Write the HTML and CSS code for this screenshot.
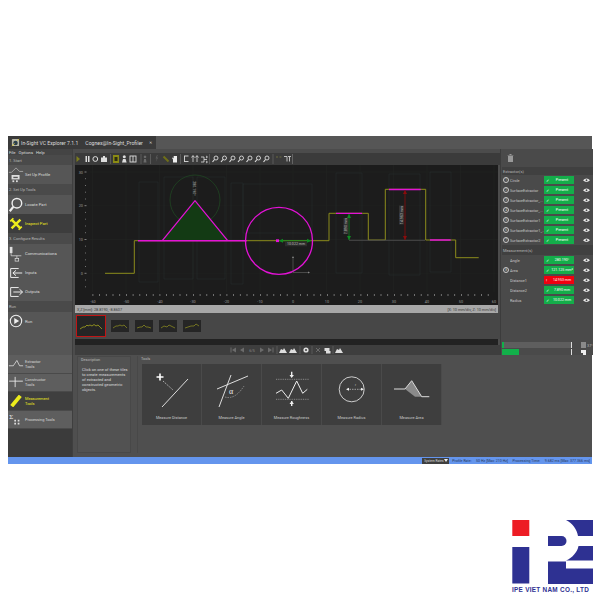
FILE: index.html
```html
<!DOCTYPE html>
<html lang="en">
<head>
<meta charset="utf-8">
<title>In-Sight VC Explorer</title>
<link rel="stylesheet" href="styles.css">
</head>
<body>
<div class="app">
  <header class="titlebar">
    <div class="title-main">
      <svg class="app-icon" viewBox="0 0 10 10"><rect x="1" y="1" width="8" height="8" rx="1" fill="#b8b8a8"/><circle cx="5" cy="5.5" r="2.5" fill="#2d3f4a"/><path d="M1 9L4 6M9 1L7 3" stroke="#d6c43a" stroke-width="1"/></svg>
      <span>In-Sight VC Explorer 7.1.1</span>
      <span class="title-doc">Cognex@In-Sight_Profiler</span>
      <span class="title-x">✕</span>
    </div>
  </header>
  <div class="workspace">
    <aside class="left">
      <nav class="menu"><span>File</span><span>Options</span><span>Help</span></nav>
      <div class="sec">1. Start</div>
      <div class="item">
        <svg class="ico" viewBox="0 0 18 18"><path d="M1 6H4L9 1L13 5H17" fill="none" stroke="#ddd" stroke-width=".6"/><rect x="4" y="9" width="9" height="5" fill="#ddd"/><rect x="6" y="11" width="5" height="1.5" fill="#555"/><rect x="5" y="15" width="2" height="2" fill="#ddd"/><rect x="9" y="15" width="2" height="2" fill="#ddd"/></svg>
        <span>Set Up Profile</span>
      </div>
      <div class="sec tall">2. Set Up Tools</div>
      <div class="item">
        <svg class="ico" viewBox="0 0 18 18"><circle cx="10" cy="7" r="5.4" fill="none" stroke="#eee" stroke-width="1.6"/><path d="M6 11L2 16" stroke="#eee" stroke-width="2.4"/></svg>
        <span>Locate Part</span>
      </div>
      <div class="item on">
        <svg class="ico" viewBox="0 0 18 18"><path d="M4 4L14 14M14 4L4 14" stroke="#ecec1c" stroke-width="2.8"/><path d="M2.500 6L6 2.500M12 15.500L15.500 12" stroke="#ecec1c" stroke-width="1.800"/></svg>
        <span>Inspect Part</span>
      </div>
      <div class="sec tall">3. Configure Results</div>
      <div class="item">
        <svg class="ico" viewBox="0 0 18 18"><rect x="2" y="1" width="3" height="7" fill="#ddd"/><path d="M3.5 8V11H15M10 11V14" stroke="#ddd" stroke-width=".8" fill="none"/><rect x="8" y="14" width="4" height="3" fill="none" stroke="#ddd" stroke-width=".8"/></svg>
        <span>Communications</span>
      </div>
      <div class="item">
        <svg class="ico" viewBox="0 0 18 18"><path d="M12 4H3V14H12M16 9H6M9 6L5.5 9L9 12" fill="none" stroke="#eee" stroke-width="1.1"/></svg>
        <span>Inputs</span>
      </div>
      <div class="item">
        <svg class="ico" viewBox="0 0 18 18"><path d="M12 4H3V14H12M6 9H16M13 6L16.5 9L13 12" fill="none" stroke="#eee" stroke-width="1.1"/></svg>
        <span>Outputs</span>
      </div>
      <div class="sec tall">Run</div>
      <div class="item fill">
        <svg class="ico" viewBox="0 0 18 18"><circle cx="9" cy="9" r="6.4" fill="none" stroke="#eee" stroke-width="1.2"/><path d="M7 5.5L12.5 9L7 12.5Z" fill="#eee"/></svg>
        <span>Run</span>
      </div>
    </aside>
    <main class="center">
      <div class="toolbar">
        <svg width="425" height="12" viewBox="75 153 425 12">
          <path d="M76.5 156L80 159L76.5 162Z" fill="#7c7c1e"/>
          <path d="M85.5 156h1.5v6h-1.5zM88 156h1.5v6H88z" fill="#ddd"/>
          <circle cx="95.3" cy="159" r="2.4" fill="none" stroke="#ddd" stroke-width="1"/>
          <path d="M101 157.5h6v4.5h-6zM103 156h2v1.5h-2z" fill="#ddd"/>
          <path d="M110.500 154v10M141 154v10M150.500 154v10M180.500 154v10M209.500 154v10M273 154v10" stroke="#707070" stroke-width=".6"/>
          <rect x="113" y="155" width="6" height="8" fill="#8b8b14"/><rect x="114.500" y="157" width="3" height="4" fill="#2e2e10"/>
          <circle cx="124.300" cy="156.700" r="1.500" fill="#ddd"/><path d="M122 162.500h4.600l-1-3.500h-2.600z" fill="#ddd"/>
          <rect x="130" y="156" width="6" height="6" fill="none" stroke="#ddd" stroke-width=".9"/><path d="M133 156v6" stroke="#ddd" stroke-width=".9"/>
          <path d="M143.500 162.500h3l-.6-3.500h-1.800zM145 155.500a1.300 1.300 0 1 0 .01 0" fill="#6a6a6a"/>
          <path d="M157 155l-1.500 3.500h1.300l-1 3.500 2.400-4.400h-1.300l.8-2.600z" fill="#5a5a5a"/>
          <path d="M163.500 156.500l5 5" stroke="#6f6f18" stroke-width="2"/>
          <path d="M173 162.500v-3l-1-1.500 1-.5.700 1v-2.500h3.300v6.500z" fill="#eee"/>
          <path d="M184 156h4.500M184 161.500h4.500M184.500 156v5.500" stroke="#ddd" stroke-width=".9"/>
          <path d="M193 162v-6M191.500 157.500l1.500-2 1.500 2M197 162v-6M195.500 157.500l1.500-2 1.500 2" stroke="#ddd" stroke-width=".8" fill="none"/>
          <path d="M201 157h3v2.500h3M201 162h3v-2.500M206 156l1.500 1-1.500 1M206 161l1.500 1-1.500 1" stroke="#ddd" stroke-width=".8" fill="none"/>
          <g fill="none" stroke="#ddd">
            <circle cx="216" cy="158" r="2" stroke-width=".9"/><path d="M214.500 159.500l-2 2.500" stroke-width="1.200"/>
            <circle cx="224.500" cy="158" r="2" stroke-width=".9"/><path d="M223 159.500l-2 2.500" stroke-width="1.200"/>
            <circle cx="233" cy="158" r="2" stroke-width=".9"/><path d="M231.500 159.500l-2 2.500" stroke-width="1.200"/>
            <circle cx="241.500" cy="158" r="2" stroke-width=".9"/><path d="M240 159.500l-2 2.500" stroke-width="1.200"/>
            <circle cx="250" cy="158" r="2" stroke-width=".9"/><path d="M248.500 159.500l-2 2.500" stroke-width="1.200"/>
            <circle cx="258.500" cy="158" r="2" stroke-width=".9"/><path d="M257 159.500l-2 2.500" stroke-width="1.200"/>
            <circle cx="267" cy="158" r="2" stroke-width=".9"/><path d="M265.500 159.500l-2 2.500" stroke-width="1.200"/>
          </g>
          <path d="M276 157h2M279.500 157h2" stroke="#6a6a40" stroke-width="1"/>
          <path d="M284 156.500h3v5M288 156.500h3M289.500 156.500v5" stroke="#ccc" stroke-width=".9" fill="none"/>
          <path d="M292.500 154v10" stroke="#808080" stroke-width=".6"/>
        </svg>
      </div>
      <div class="chart">
        <svg class="plot" width="423" height="140" viewBox="75 165 423 140">
          <g stroke="#232423" stroke-width=".5">
            <path d="M92.500 165V292M126 165V292M159.500 165V292M193 165V292M226.500 165V292M260 165V292M293 165V292M326.500 165V292M360 165V292M393.500 165V292M427 165V292M460.500 165V292M494 165V292"/>
            <path d="M90 172H498M90 205.700H498M90 239.500H498M90 273.300H498"/>
          </g>
          <g fill="none" stroke="#2b3435" stroke-width=".4">
            <rect x="139" y="182" width="19" height="100"/>
            <rect x="164" y="177" width="29" height="102"/>
            <rect x="197" y="177" width="28" height="102"/>
            <rect x="231" y="183" width="12" height="101"/>
            <rect x="243" y="184" width="69" height="49"/>
            <rect x="336" y="173" width="26" height="100"/>
            <rect x="389" y="174" width="31" height="101"/>
            <rect x="430" y="172" width="21" height="100"/>
          </g>
          <circle cx="195" cy="200" r="25" fill="none" stroke="#1f4a22" stroke-width=".7"/>
          <path d="M162.300 240.700L195 200.700L227.700 240.700Z" fill="#133a14"/>
          <path d="M105 273.300H134.300V240.700H329V213.300H368.300V240H385.300V189.300H425.700V240H455.700V257.700H478.700" fill="none" stroke="#8c8c1c" stroke-width="1"/>
          <path d="M349 240.300H425" stroke="#4a4a4a" stroke-width="1"/>
          <g fill="none" stroke="#e312d6">
            <path d="M138 240.700H246.700" stroke-width="1.500"/>
            <path d="M162.300 240.700L195 200.700L227.700 240.700" stroke-width="1.300"/>
            <path d="M336 213.300H362M389 189.500H420.700M430 240H450.700" stroke-width="1.300"/>
            <circle cx="279" cy="240.800" r="33.500" stroke-width="1.300"/>
          </g>
          <g stroke="#0e8a22" stroke-width=".8" fill="none">
            <path d="M279 240.700H311"/><path d="M349 214V240"/>
          </g>
          <path d="M279 240.700l4-2v4zM311 240.700l-4-2v4zM349 214l-2 4h4zM349 240l-2-4h4z" fill="#0e8a22"/>
          <path d="M405 190.500V240" stroke="#8a0c0c" stroke-width=".8"/>
          <path d="M405 190l-2 4h4zM405 240l-2-4h4z" fill="#8a0c0c"/>
          <path d="M293 272.500V257M293 272.500H309" stroke="#777" stroke-width=".5" fill="none"/>
          <path d="M293 256l-1 2h2zM310 272.500l-2-1v2z" fill="#888"/>
          <rect x="276" y="239.300" width="3" height="2.800" fill="#e312d6"/>
          <g class="tick-y" fill="#9a9a9a">
            <text x="83" y="173.500" text-anchor="end">30</text><text x="83" y="207.200" text-anchor="end">20</text><text x="83" y="241" text-anchor="end">10</text><text x="83" y="274.800" text-anchor="end">0</text>
          </g>
          <g stroke="#999" stroke-width=".8">
            <path d="M84.500 172h2M84.500 205.700h2M84.500 239.500h2M84.500 273.300h2"/>
            <path d="M85 178.700h1M85 185.500h1M85 192.200h1M85 199h1M85 212.400h1M85 219.200h1M85 226h1M85 232.700h1M85 246.200h1M85 253h1M85 259.800h1M85 266.500h1M85 280h1M85 286.800h1" stroke-width=".7"/>
          </g>
          <path d="M92.500 295h401.500" stroke="#aaa" stroke-width="1.400" stroke-dasharray=".8 5.900" fill="none"/>
          <g class="tick-x" fill="#9a9a9a" text-anchor="middle">
            <text x="93" y="303">-60</text><text x="126.500" y="303">-50</text><text x="160" y="303">-40</text><text x="193" y="303">-30</text><text x="226.500" y="303">-20</text><text x="260" y="303">-10</text><text x="293" y="303">0</text><text x="327" y="303">10</text><text x="360" y="303">20</text><text x="394" y="303">30</text><text x="427" y="303">40</text><text x="461" y="303">50</text><text x="494" y="303">60</text>
          </g>
          <rect x="285" y="241.800" width="22" height="4.500" fill="#2c2c2c"/>
          <text class="tag" x="296" y="245.400" text-anchor="middle">10.022 mm</text>
          <g transform="rotate(90 194.700 188.500)"><text class="tag" x="194.700" y="190" text-anchor="middle">280.190°</text></g>
          <g transform="rotate(-90 346 226)"><rect x="338" y="223.500" width="16" height="4.800" fill="#333"/><text class="tag" x="346" y="227.300" text-anchor="middle">7.890 mm</text></g>
          <g transform="rotate(-90 401.500 215)"><rect x="392" y="212.500" width="19" height="4.800" fill="#333"/><text class="tag" x="401.500" y="216.300" text-anchor="middle">14.953 mm</text></g>
        </svg>
      </div>
      <div class="coords"><span>X,Z [mm]: 28.8190, -8.8607</span><span>[X: 10 mm/div, Z: 10 mm/div]</span></div>
      <div class="thumbs">
        <svg class="thumb big" viewBox="0 0 28 20"><path d="M3 13L6 11H8L10 9L11 10L13 9L15 10L17 8.500L19 10L21 9L23 11L25 13" fill="none" stroke="#a6a61e" stroke-width=".8"/></svg>
        <svg class="thumb" viewBox="0 0 18 12"><path d="M2 8L5 6H7L9 5L11 6L13 5L16 8" fill="none" stroke="#a6a61e" stroke-width=".6"/></svg>
        <svg class="thumb" viewBox="0 0 18 12"><path d="M2 8L5 7H7L9 5L11 7H13L16 8" fill="none" stroke="#a6a61e" stroke-width=".6"/></svg>
        <svg class="thumb" viewBox="0 0 18 12"><path d="M2 8L5 6L8 7L10 5L12 6L16 8" fill="none" stroke="#a6a61e" stroke-width=".6"/></svg>
        <svg class="thumb" viewBox="0 0 18 12"><path d="M2 8L5 7L8 6L11 6L13 4L16 6" fill="none" stroke="#a6a61e" stroke-width=".6"/></svg>
      </div>
      <div class="track"></div>
      <div class="controls">
        <svg width="425" height="10" viewBox="75 345 425 10">
          <g fill="#6b6b6b">
            <path d="M230.500 347.500h1v5h-1zM236 347.500v5l-4-2.500zM244 347.500v5l-4-2.500zM260 347.500v5l4-2.500zM268 347.500v5l4-2.500zM272.500 347.500h1v5h-1z"/>
          </g>
          <text class="tag dim" x="252" y="351.600" text-anchor="middle">6/5</text>
          <path d="M277 346v8M300 346v8M312 346v8M333 346v8" stroke="#777" stroke-width=".5"/>
          <g fill="#ddd">
            <path d="M279 353l2-4 2 1 1-2 3 5zM289 353l2-4 2 1 1-2 3 5zM335 353l2-4 2 1 1-2 3 5z"/>
            <circle cx="306" cy="350" r="2.600"/>
            <path d="M324.500 348h5v3h-5zM326 351h4.500v2.500h-4.500z"/>
          </g>
          <circle cx="306" cy="350" r="1" fill="#3e3e3e"/>
          <path d="M316 348l4 4M320 348l-4 4" stroke="#6b6b6b" stroke-width="1"/>
        </svg>
      </div>
    </main>
    <aside class="right">
      <div class="trash">
        <svg width="7" height="8" viewBox="0 0 7 8"><path d="M1 2h5v6H1zM2.500 0h2v1h2v.6h-6V1h2z" fill="#999"/></svg>
      </div>
      <div class="rhead">Extractor(s)</div>
      <div class="row"><i class="num">1</i><span class="name">Circle</span><b class="pill ok"><u>✓</u><em>Present</em></b><svg class="eye" viewBox="0 0 10 6"><path d="M0 3Q5 -2 10 3Q5 8 0 3Z" fill="#eee"/><circle cx="5" cy="3" r="1.300" fill="#444"/></svg></div>
      <div class="row"><i class="num">2</i><span class="name">SurfaceExtractor</span><b class="pill ok"><u>✓</u><em>Present</em></b><svg class="eye" viewBox="0 0 10 6"><path d="M0 3Q5 -2 10 3Q5 8 0 3Z" fill="#eee"/><circle cx="5" cy="3" r="1.300" fill="#444"/></svg></div>
      <div class="row"><i class="num">3</i><span class="name">SurfaceExtractor_...</span><b class="pill ok"><u>✓</u><em>Present</em></b><svg class="eye" viewBox="0 0 10 6"><path d="M0 3Q5 -2 10 3Q5 8 0 3Z" fill="#eee"/><circle cx="5" cy="3" r="1.300" fill="#444"/></svg></div>
      <div class="row"><i class="num">4</i><span class="name">SurfaceExtractor_...</span><b class="pill ok"><u>✓</u><em>Present</em></b><svg class="eye" viewBox="0 0 10 6"><path d="M0 3Q5 -2 10 3Q5 8 0 3Z" fill="#eee"/><circle cx="5" cy="3" r="1.300" fill="#444"/></svg></div>
      <div class="row"><i class="num">5</i><span class="name">SurfaceExtractor1</span><b class="pill ok"><u>✓</u><em>Present</em></b><svg class="eye" viewBox="0 0 10 6"><path d="M0 3Q5 -2 10 3Q5 8 0 3Z" fill="#eee"/><circle cx="5" cy="3" r="1.300" fill="#444"/></svg></div>
      <div class="row"><i class="num">6</i><span class="name">SurfaceExtractor1_...</span><b class="pill ok"><u>✓</u><em>Present</em></b><svg class="eye" viewBox="0 0 10 6"><path d="M0 3Q5 -2 10 3Q5 8 0 3Z" fill="#eee"/><circle cx="5" cy="3" r="1.300" fill="#444"/></svg></div>
      <div class="row"><i class="num">7</i><span class="name">SurfaceExtractor2</span><b class="pill ok"><u>✓</u><em>Present</em></b><svg class="eye" viewBox="0 0 10 6"><path d="M0 3Q5 -2 10 3Q5 8 0 3Z" fill="#eee"/><circle cx="5" cy="3" r="1.300" fill="#444"/></svg></div>
      <div class="rhead second">Measurement(s)</div>
      <div class="row"><i class="num none"></i><span class="name">Angle</span><b class="pill ok"><u>✓</u><em>280.190°</em></b><svg class="eye" viewBox="0 0 10 6"><path d="M0 3Q5 -2 10 3Q5 8 0 3Z" fill="#eee"/><circle cx="5" cy="3" r="1.300" fill="#444"/></svg></div>
      <div class="row"><i class="num">8</i><span class="name">Area</span><b class="pill ok"><u>✓</u><em>121.125 mm²</em></b><svg class="eye" viewBox="0 0 10 6"><path d="M0 3Q5 -2 10 3Q5 8 0 3Z" fill="#eee"/><circle cx="5" cy="3" r="1.300" fill="#444"/></svg></div>
      <div class="row"><i class="num none"></i><span class="name">Distance1</span><b class="pill bad"><u>!</u><em>14.953 mm</em></b><svg class="eye" viewBox="0 0 10 6"><path d="M0 3Q5 -2 10 3Q5 8 0 3Z" fill="#eee"/><circle cx="5" cy="3" r="1.300" fill="#444"/></svg></div>
      <div class="row"><i class="num none"></i><span class="name">Distance2</span><b class="pill ok"><u>✓</u><em>7.890 mm</em></b><svg class="eye" viewBox="0 0 10 6"><path d="M0 3Q5 -2 10 3Q5 8 0 3Z" fill="#eee"/><circle cx="5" cy="3" r="1.300" fill="#444"/></svg></div>
      <div class="row"><i class="num none"></i><span class="name">Radius</span><b class="pill ok"><u>✓</u><em>10.022 mm</em></b><svg class="eye" viewBox="0 0 10 6"><path d="M0 3Q5 -2 10 3Q5 8 0 3Z" fill="#eee"/><circle cx="5" cy="3" r="1.300" fill="#444"/></svg></div>
      <div class="meters">
        <div class="meter-row">
          <div class="meter"><i class="meter-a"></i></div>
          <svg class="meter-ico" width="5" height="6" viewBox="0 0 5 6"><path d="M0 0h5v6H0z" fill="#8a8a8a"/></svg>
          <span class="temp">37°</span>
        </div>
        <div class="meter-row">
          <div class="meter plain"><i class="meter-b"></i></div>
          <svg class="meter-ico" width="5" height="5" viewBox="0 0 5 5"><path d="M0 0h5v5H2V3H0z" fill="#eee"/></svg>
        </div>
      </div>
    </aside>
  </div>
  <section class="lower">
    <div class="tabs">
      <div class="tab">
        <svg class="tab-ico" viewBox="0 0 18 12"><path d="M1 8H6L10 2L13 8H17" fill="none" stroke="#eee" stroke-width=".8"/></svg>
        <span>Extractor<br>Tools</span>
      </div>
      <div class="tab">
        <svg class="tab-ico" viewBox="0 0 18 14"><path d="M1 6H17M8 1V13" fill="none" stroke="#eee" stroke-width="1"/></svg>
        <span>Constructor<br>Tools</span>
      </div>
      <div class="tab on">
        <svg class="tab-ico" viewBox="0 0 18 14"><path d="M4 13L14 1" stroke="#ecec1c" stroke-width="4.500"/></svg>
        <span>Measurement<br>Tools</span>
      </div>
      <div class="tab">
        <svg class="tab-ico" viewBox="0 0 18 14"><text class="sigma" x="1" y="7">Σ</text><path d="M7 8h2v2H7zM11 8h2v2h-2zM7 11.500h2v2H7zM11 11.500h2v2h-2z" fill="#ddd"/></svg>
        <span>Processing Tools</span>
      </div>
      <div class="tab-rest"></div>
    </div>
    <div class="content">
      <div class="panel desc">
        <h4>Description</h4>
        <p class="desc-text">Click on one of these tiles<br>to create measurements<br>of extracted and<br>constructed geometric<br>objects.</p>
      </div>
      <div class="panel tools">
        <h4>Tools</h4>
        <div class="tiles">
          <div class="tile">
            <svg viewBox="0 0 60 50" width="60" height="50"><path d="M18 9.500v7M14.500 13h7" stroke="#fff" stroke-width="1.600"/><path d="M21 17L31 26" stroke="#ccc" stroke-width=".8" stroke-dasharray="1.500 1"/><path d="M20 43L46 15" stroke="#eee" stroke-width=".9"/></svg>
            <span>Measure Distance</span>
          </div>
          <div class="tile">
            <svg viewBox="0 0 60 50" width="60" height="50"><path d="M15 25L46 12M17 43L29 11" stroke="#eee" stroke-width=".9"/><path d="M23 33Q33 36 42 22" fill="none" stroke="#aaa" stroke-width=".7" stroke-dasharray="1.500 1"/><text class="alpha" x="27" y="30">α</text></svg>
            <span>Measure Angle</span>
          </div>
          <div class="tile">
            <svg viewBox="0 0 60 50" width="60" height="50"><path d="M14 15.300H47M14 35.300H47" stroke="#bbb" stroke-width=".6" stroke-dasharray="1 .8"/><path d="M14 29.300L19.700 26L26.300 34.300L34.700 17L40.700 29.300L45.300 25.300" fill="none" stroke="#eee" stroke-width="1"/><path d="M29.700 7.700v4M29.700 37v5" stroke="#eee" stroke-width="1.400"/><path d="M27.500 11h4.400l-2.200 3zM27.500 40h4.400l-2.200-3z" fill="#eee"/></svg>
            <span>Measure Roughness</span>
          </div>
          <div class="tile">
            <svg viewBox="0 0 60 50" width="60" height="50"><circle cx="29.700" cy="25.300" r="12.500" fill="none" stroke="#ddd" stroke-width=".9"/><path d="M25 25.300H41" stroke="#ccc" stroke-width=".7" stroke-dasharray="1.500 1"/><path d="M24 25.300l3-1.500v3zM42 25.300l-3-1.500v3z" fill="#eee"/><text class="mini" x="33" y="22">r</text></svg>
            <span>Measure Radius</span>
          </div>
          <div class="tile">
            <svg viewBox="0 0 60 50" width="60" height="50"><path d="M23 25L29.700 17L39.700 32.700H33Z" fill="#8a8a8a"/><path d="M12 25H23L29.700 16.700L39.700 32.700H47.300" fill="none" stroke="#ddd" stroke-width="1"/></svg>
            <span>Measure Area</span>
          </div>
        </div>
      </div>
    </div>
  </section>
  <footer class="status">
    <div class="sys">System Rates <svg width="4" height="3" viewBox="0 0 4 3"><path d="M0 0h4L2 3z" fill="#eee"/></svg></div>
    <span>Profile Rate:</span><span>50 Hz [Max: 210 Hz]</span><span>Processing Time:</span><span>9.682 ms [Max: 377.366 ms]</span>
  </footer>
</div>
<div class="logo">
  <svg width="82" height="65" viewBox="512 520 82 65">
    <rect x="512.300" y="520" width="17" height="16" fill="#ed1c24"/>
    <rect x="512.300" y="547" width="17" height="36.500" fill="#2e3192"/>
    <path d="M566 520H593V536H578C577 529 572 523 566 520Z" fill="#2e3192"/>
    <path d="M548 536H561.500a5 5 0 0 1 0 10H548Z" fill="#2e3192"/>
    <path d="M578.500 546H593V560.500H566C572 558 577.500 552 578.500 546Z" fill="#2e3192"/>
    <path d="M548 561.500H566V568.500H593V584H548Z" fill="#2e3192"/>
  </svg>
  <div class="logo-text">IPE VIET NAM CO., LTD</div>
</div>
</body>
</html>
```

FILE: styles.css
```css
* { box-sizing: border-box; }
html, body { margin: 0; padding: 0; background: #fff; }
body { width: 600px; height: 600px; padding: 136px 8px 0; overflow: hidden; font-family: Roboto, "Liberation Sans", sans-serif; }

.app { width: 584px; height: 328px; background: #4c4c4c; color: #cfcfcf; font-size: 4.2px; display: flex; flex-direction: column; }

.titlebar { height: 13px; background: #565656; flex: none; }
.title-main { width: 148px; height: 13px; background: #3a3a3a; display: flex; align-items: center; padding-left: 3px; font-size: 5.100px; color: #ddd; white-space: nowrap; }
.app-icon { width: 9px; height: 9px; margin-right: 1px; flex: none; }
.title-doc { margin-left: 7px; }
.title-x { margin-left: 6px; font-size: 4px; color: #ddd; }

.workspace { display: flex; height: 206px; flex: none; }

.left { width: 65px; flex: none; display: flex; flex-direction: column; background: #565656; border-right: 1px solid #3f3f3f; }
.menu { height: 6px; background: #444; display: flex; align-items: center; gap: 3px; padding-left: 1px; color: #ddd; }
.sec { height: 10px; background: #4a4a4a; display: flex; align-items: center; padding-left: 1px; color: #b8b8b8; font-size: 4px; }
.sec.tall { height: 11px; }
.item { height: 19px; display: flex; align-items: center; background: #565656; color: #ddd; font-size: 4.2px; }
.item.fill { flex: 1; align-items: flex-start; padding-top: 1px; }
.item.fill span { margin-top: 6px; }
.item.on { background: #3d3d3d; color: #ecec1c; }
.ico { width: 16px; height: 16px; margin-right: 1px; flex: none; }

.center { width: 427px; flex: none; display: flex; flex-direction: column; padding-left: 2px; padding-top: 4px; background: #4c4c4c; }
.toolbar { height: 12px; background: #3b3b3b; flex: none; }
.toolbar svg, .controls svg { display: block; }
.chart { height: 140px; width: 423px; background: #1c1c1c; flex: none; }
.plot { display: block; }
.plot text { font-family: Roboto, "Liberation Sans", sans-serif; font-size: 3.8px; }
.plot .tag, .tag { fill: #bdbdbd; font-size: 3.6px; font-family: Roboto, "Liberation Sans", sans-serif; }
.tag.dim { fill: #888; }

.coords { height: 8px; width: 423px; background: #a8a8a8; color: #3a3a3a; font-size: 3.8px; display: flex; justify-content: space-between; align-items: center; padding: 0 2px; flex: none; }

.thumbs { height: 26px; display: flex; align-items: center; gap: 6px; padding-left: 2px; flex: none; background: #474747; }
.thumb { width: 18px; height: 12px; background: #252525; flex: none; }
.thumb.big { width: 28px; height: 20px; outline: 1px solid #c01515; }

.track { height: 6px; background: #222; flex: none; width: 423px; }
.controls { height: 10px; background: #3e3e3e; flex: none; }

.right { flex: 1; display: flex; flex-direction: column; background: #4a4a4a; padding-left: 1px; border-left: 1px solid #3c3c3c; }
.trash { height: 18px; padding: 5px 0 0 5px; }
.rhead { height: 8px; background: #404040; font-size: 4px; color: #b5b5b5; padding-left: 1px; display: flex; align-items: center; }
.rhead.second { height: 10px; }
.row { height: 10px; display: flex; align-items: center; padding-left: 1px; flex: none; }
.num { width: 6px; height: 6px; margin: 0 1px 0 0; border: .6px solid #ccc; border-radius: 50%; font-size: 3px; font-style: normal; line-height: 5px; text-align: center; flex: none; }
.num.none { border: 0; }
.name { width: 34px; color: #c8c8c8; font-size: 3.8px; white-space: nowrap; overflow: hidden; }
.pill { width: 30px; height: 8.500px; display: flex; align-items: center; padding-left: 2px; color: #fff; font-size: 4px; font-weight: 400; flex: none; white-space: nowrap; }
.pill u { text-decoration: none; width: 4px; flex: none; }
.pill em { font-style: normal; font-size: 3.600px; flex: 1; text-align: center; }
.ok { background: #14ad4a; }
.bad { background: #f00010; }
.eye { width: 7px; height: 4.500px; margin-left: 9px; flex: none; }

.meters { margin-top: auto; height: 13px; display: flex; flex-direction: column; gap: 1px; }
.meter-row { display: flex; align-items: center; height: 6px; }
.meter { width: 70px; height: 6px; background: #5e5e5e; border-right: 1px solid #ddd; flex: none; }
.meter.plain { background: #4a4a4a; }
.meter i { display: block; height: 100%; background: #12b04a; }
.meter-a { width: 1.500px; }
.meter-b { width: 17px; }
.meter-ico { margin-left: 9px; flex: none; }
.temp { font-size: 3.800px; margin-left: 1px; color: #bbb; }

.lower { height: 102px; display: flex; flex: none; background: #4f4f4f; }
.tabs { width: 65px; flex: none; display: flex; flex-direction: column; border-right: 1px solid #3f3f3f; }
.tab { height: 18.500px; background: #5e5e5e; display: flex; align-items: center; color: #d8d8d8; font-size: 3.900px; line-height: 5px; border-bottom: 1px solid #4a4a4a; }
.tab.on { background: #3f3f3f; color: #ecec1c; }
.tab-ico { width: 16px; height: 12px; margin: 0 1px 0 0; flex: none; }
.tab-rest { flex: 1; background: #3b3b3b; }
.sigma { fill: #eee; font-size: 8px; font-family: "Liberation Serif", serif; }

.content { flex: 1; display: flex; gap: 6px; padding: 1px 0 4px 4px; }
.panel { display: flex; flex-direction: column; }
.panel h4 { margin: 0; height: 6px; font-size: 3.800px; font-weight: 400; line-height: 5px; color: #bbb; padding-left: 3px; }
.desc { width: 54px; flex: none; background: #525252; border: 1px solid #484848; }
.desc-text { margin: 4px 0 0 4px; font-size: 4px; line-height: 5.100px; color: #dcdcdc; white-space: nowrap; }
.tools { flex: 1; border-left: 1px solid #484848; }
.tiles { display: flex; margin: 2px 0 0 4px; }
.tile { width: 60px; height: 61px; background: #3e3e3e; border-right: 1px solid #4a4a4a; display: flex; flex-direction: column; align-items: center; color: #c9c9c9; font-size: 3.900px; flex: none; }
.tile svg { flex: none; }
.tile span { margin-top: 1px; }
.alpha { fill: #eee; font-size: 8px; font-family: "Liberation Serif", serif; }
.mini { fill: #ccc; font-size: 3px; font-family: "Liberation Serif", serif; }

.status { height: 7px; background: #6495ed; flex: none; display: flex; align-items: center; justify-content: flex-end; gap: 4.500px; padding-right: 2px; color: #2a3a5a; font-size: 3.600px; white-space: nowrap; }
.sys { width: 27px; height: 6px; background: #3f3f3f; color: #ddd; font-size: 3.200px; display: flex; align-items: center; justify-content: space-between; padding: 0 1px 0 2px; margin-right: -1.500px; }

.logo { margin: 56px 0 0 504px; width: 82px; }
.logo svg { display: block; }
.logo-text { color: #2e3192; font-family: "Liberation Sans", sans-serif; font-size: 6.400px; font-weight: 700; line-height: 9px; white-space: nowrap; letter-spacing: .28px; }
```
